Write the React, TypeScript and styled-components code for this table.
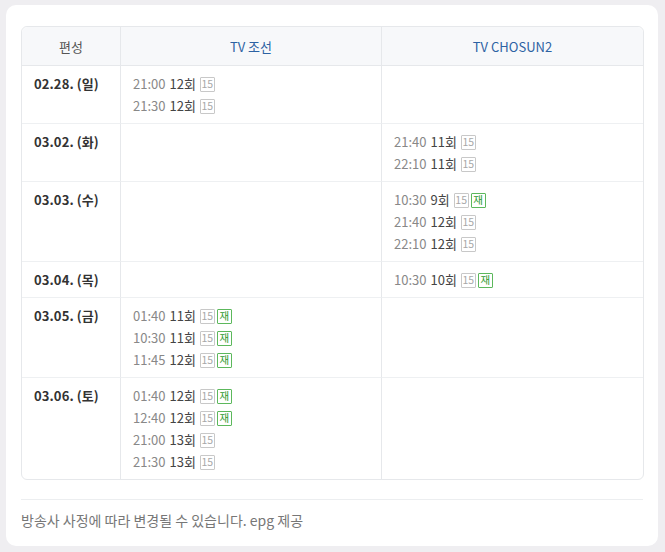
import React from "react";
import styled, { createGlobalStyle } from "styled-components";

const Global = createGlobalStyle`
  html, body { margin: 0; padding: 0; background: #efeef1; }
  body { font-family: "Noto Sans CJK KR", "Noto Sans", sans-serif; }
`;

const Page = styled.div`
  padding: 5px 7px 6px 6px;
`;

const Card = styled.div`
  background: #fff;
  border-radius: 10px;
  padding: 21px 15px 12px 15px;
  box-sizing: border-box;
  height: 541px;
`;

const Table = styled.table`
  width: 623px;
  border-collapse: separate;
  border-spacing: 0;
  border: 1px solid #e6e8eb;
  border-radius: 6px;
  table-layout: fixed;
  font-size: 13px;
`;

const Th = styled.th<{ $blue?: boolean }>`
  height: 38px;
  padding: 0;
  font-weight: 400;
  background: #f7f8fa;
  color: ${(p) => (p.$blue ? "#2d62a3" : "#555")};
  border-bottom: 1px solid #e6e8eb;
  border-left: 1px solid #e6e8eb;
  &:first-child { border-left: none; border-top-left-radius: 6px; }
  &:last-child { border-top-right-radius: 6px; }
`;

const Td = styled.td<{ $last?: boolean }>`
  vertical-align: top;
  padding: 7px 12px 6px 12px;
  border-left: 1px solid #e6e8eb;
  border-bottom: ${(p) => (p.$last ? "none" : "1px solid #eef0f2")};
  &:first-child { border-left: none; }
`;

const DateText = styled.div`
  font-weight: 700;
  color: #333;
  line-height: 22px;
  letter-spacing: 0.1px;
`;

const Item = styled.div`
  display: flex;
  align-items: center;
  height: 22px;
  line-height: 22px;
`;

const Time = styled.span`
  color: #888;
`;

const Ep = styled.span`
  color: #444;
  margin-left: 4px;
  margin-right: 4px;
`;

const Badge = styled.span<{ $re?: boolean }>`
  display: inline-flex;
  align-items: center;
  justify-content: center;
  box-sizing: border-box;
  width: 15px;
  height: 15px;
  margin-right: 2px;
  font-size: 10.5px;
  line-height: 1;
  border: 1px solid ${(p) => (p.$re ? "#5cb85c" : "#c8c8c8")};
  color: ${(p) => (p.$re ? "#2e9a2e" : "#a8a8a8")};
  border-radius: 1px;
`;

const Footer = styled.div`
  margin-top: 19px;
  border-top: 1px solid #eceef0;
  padding-top: 9px;
  font-size: 14px;
  color: #777;
  line-height: 22px;
`;

type Show = { t: string; e: string; re?: boolean };
type Row = { d: string; a: Show[]; b: Show[] };

const rows: Row[] = [
  { d: "02.28. (일)", a: [{ t: "21:00", e: "12회" }, { t: "21:30", e: "12회" }], b: [] },
  { d: "03.02. (화)", a: [], b: [{ t: "21:40", e: "11회" }, { t: "22:10", e: "11회" }] },
  {
    d: "03.03. (수)",
    a: [],
    b: [{ t: "10:30", e: "9회", re: true }, { t: "21:40", e: "12회" }, { t: "22:10", e: "12회" }],
  },
  { d: "03.04. (목)", a: [], b: [{ t: "10:30", e: "10회", re: true }] },
  {
    d: "03.05. (금)",
    a: [
      { t: "01:40", e: "11회", re: true },
      { t: "10:30", e: "11회", re: true },
      { t: "11:45", e: "12회", re: true },
    ],
    b: [],
  },
  {
    d: "03.06. (토)",
    a: [
      { t: "01:40", e: "12회", re: true },
      { t: "12:40", e: "12회", re: true },
      { t: "21:00", e: "13회" },
      { t: "21:30", e: "13회" },
    ],
    b: [],
  },
];

const List = ({ items }: { items: Show[] }) => (
  <>
    {items.map((s, i) => (
      <Item key={i}>
        <Time>{s.t}</Time>
        <Ep>{s.e}</Ep>
        <Badge>15</Badge>
        {s.re && <Badge $re>재</Badge>}
      </Item>
    ))}
  </>
);

export default function App() {
  return (
    <>
      <Global />
      <Page>
        <Card>
          <Table>
            <colgroup>
              <col style={{ width: 98 }} />
              <col style={{ width: 261 }} />
              <col style={{ width: 262 }} />
            </colgroup>
            <thead>
              <tr>
                <Th>편성</Th>
                <Th $blue>TV 조선</Th>
                <Th $blue>TV CHOSUN2</Th>
              </tr>
            </thead>
            <tbody>
              {rows.map((r, i) => {
                const last = i === rows.length - 1;
                return (
                  <tr key={r.d}>
                    <Td $last={last}>
                      <DateText>{r.d}</DateText>
                    </Td>
                    <Td $last={last}>
                      <List items={r.a} />
                    </Td>
                    <Td $last={last}>
                      <List items={r.b} />
                    </Td>
                  </tr>
                );
              })}
            </tbody>
          </Table>
          <Footer>방송사 사정에 따라 변경될 수 있습니다. epg 제공</Footer>
        </Card>
      </Page>
    </>
  );
}
